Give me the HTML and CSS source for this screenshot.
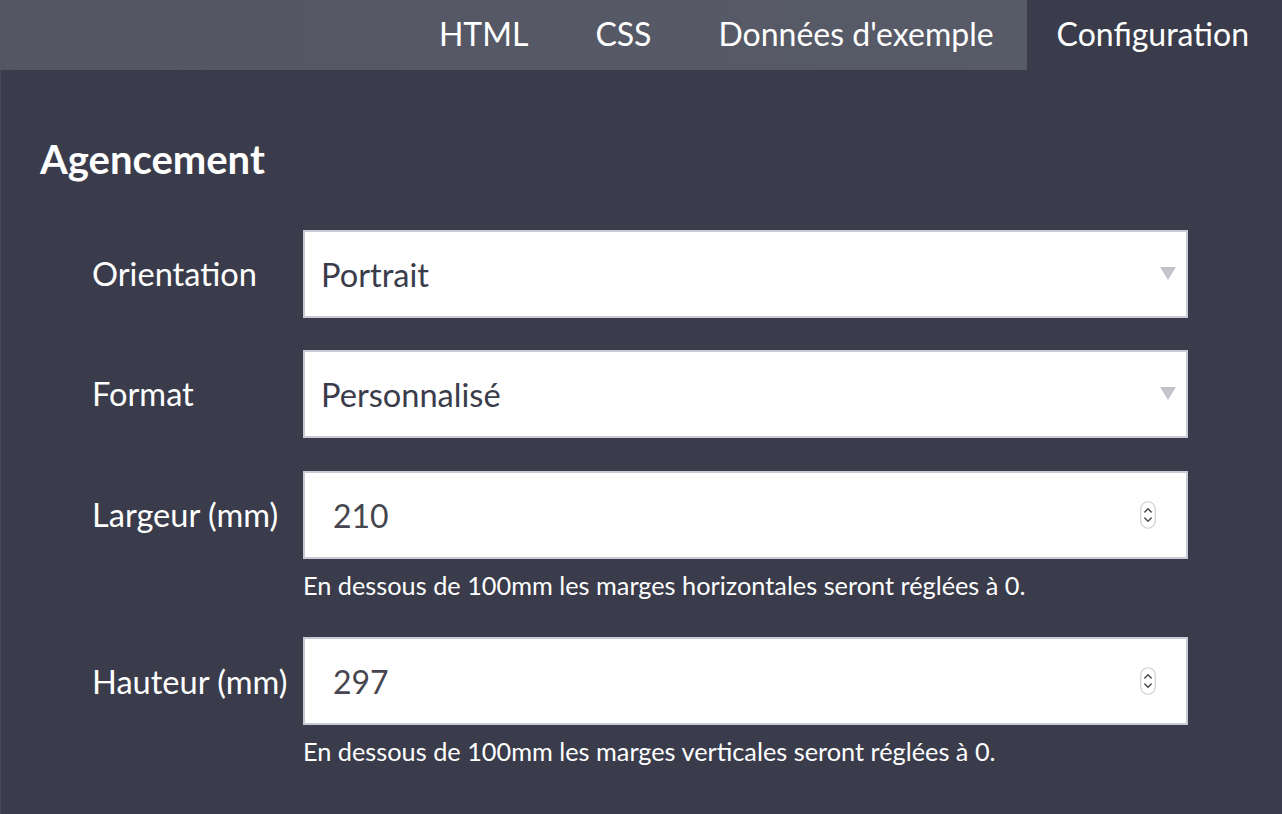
FILE: index.html
```html
<!DOCTYPE html>
<html lang="fr">
<head>
<meta charset="utf-8">
<title>Configuration</title>
<link rel="stylesheet" href="styles.css">
</head>
<body>
<nav class="tabs">
  <a class="tab">HTML</a>
  <a class="tab">CSS</a>
  <a class="tab">Données d'exemple</a>
  <a class="tab active">Configuration</a>
</nav>
<main class="content">
  <h1 class="title">Agencement</h1>
  <div class="form">
    <label class="label">Orientation</label>
    <div class="field select-wrap">
      <select class="control select"><option>Portrait</option><option>Paysage</option></select>
    </div>

    <label class="label">Format</label>
    <div class="field select-wrap">
      <select class="control select"><option>Personnalisé</option><option>A4</option></select>
    </div>

    <label class="label row3">Largeur (mm)</label>
    <div class="field number-wrap row3">
      <input class="control number" type="text" value="210">
      <svg class="spinner" width="16" height="28" viewBox="0 0 16 28"><rect x="0.75" y="0.75" width="14.5" height="26.5" rx="7.25" fill="#fff" stroke="#cfcfd4" stroke-width="1.2"/><path d="M4.8 11 L8 7.8 L11.2 11" fill="none" stroke="#4a4a4f" stroke-width="1.5" stroke-linecap="round" stroke-linejoin="round"/><path d="M4.8 17 L8 20.2 L11.2 17" fill="none" stroke="#4a4a4f" stroke-width="1.5" stroke-linecap="round" stroke-linejoin="round"/></svg>
    </div>
    <p class="help">En dessous de 100mm les marges horizontales seront réglées à 0.</p>

    <label class="label">Hauteur (mm)</label>
    <div class="field number-wrap">
      <input class="control number" type="text" value="297">
      <svg class="spinner" width="16" height="28" viewBox="0 0 16 28"><rect x="0.75" y="0.75" width="14.5" height="26.5" rx="7.25" fill="#fff" stroke="#cfcfd4" stroke-width="1.2"/><path d="M4.8 11 L8 7.8 L11.2 11" fill="none" stroke="#4a4a4f" stroke-width="1.5" stroke-linecap="round" stroke-linejoin="round"/><path d="M4.8 17 L8 20.2 L11.2 17" fill="none" stroke="#4a4a4f" stroke-width="1.5" stroke-linecap="round" stroke-linejoin="round"/></svg>
    </div>
    <p class="help">En dessous de 100mm les marges verticales seront réglées à 0.</p>
  </div>
</main>
</body>
</html>
```

FILE: styles.css
```css
* { box-sizing: border-box; }
html, body { margin: 0; padding: 0; }
body {
  background: #3a3c4b;
  color: #ffffff;
  font-family: Lato, "Open Sans", "DejaVu Sans", sans-serif;
  width: 1282px;
  height: 814px;
  overflow: hidden;
}
.tabs {
  display: flex;
  justify-content: flex-end;
  height: 70px;
  background: linear-gradient(90deg, #545763 0%, #585b68 100%);
}
.tab {
  display: block;
  height: 70px;
  padding: 15px 33px 0 34px;
  font-size: 32px;
  line-height: 1.2;
  color: #ffffff;
  cursor: pointer;
}
.tab.active {
  background: #3a3c4b;
  padding-left: 30px;
}
.content {
  height: 744px;
  padding: 65px 0 0 39px;
  border-left: 1px solid #464858;
}
.title {
  margin: 0;
  font-size: 40px;
  line-height: 1.2;
  font-weight: 700;
}
.form {
  display: grid;
  grid-template-columns: 211px 885px;
  align-items: center;
  margin: 47px 0 0 52px;
}
.label {
  font-size: 32.6px;
  line-height: 1.2;
  margin-top: 32px;
}
.form > .label:first-child { margin-top: 0; }
.field {
  position: relative;
  grid-column: 2;
  margin-top: 32px;
}
.form > .field:nth-child(2) { margin-top: 0; }
.form > .row3 { margin-top: 33px; }
.control {
  display: block;
  width: 885px;
  height: 88px;
  margin: 0;
  border: 2px solid #c9cad6;
  border-radius: 0;
  background: #ffffff;
  color: #3a3c4b;
  font-family: Lato, "Open Sans", sans-serif;
  font-size: 32.6px;
  outline: none;
}
.select {
  appearance: none;
  -webkit-appearance: none;
  padding: 0 0 0 16px;
}
.select-wrap::after {
  content: "";
  position: absolute;
  right: 12px;
  top: 37px;
  border-left: 8px solid transparent;
  border-right: 8px solid transparent;
  border-top: 13px solid #c3c4cb;
}
.number {
  padding: 0 0 0 28px;
  font-size: 32px;
  color: #45464f;
}
.spinner {
  position: absolute;
  right: 32px;
  top: 30px;
}
.help {
  grid-column: 2;
  margin: 11px 0 5px 0;
  font-size: 25.3px;
  line-height: 1.2;
}
```
